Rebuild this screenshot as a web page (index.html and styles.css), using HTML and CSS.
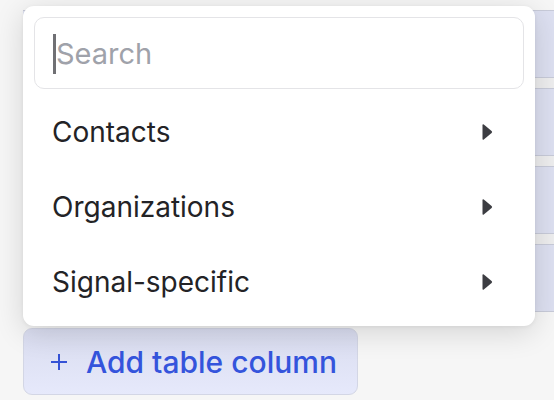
FILE: index.html
```html
<!DOCTYPE html>
<html>
<head>
<meta charset="utf-8">
<link rel="stylesheet" href="styles.css">
</head>
<body>
<div class="page">
  <div class="table">
    <div class="row"></div>
    <div class="band"></div>
    <div class="row"></div>
    <div class="band"></div>
    <div class="row"></div>
    <div class="band"></div>
    <div class="row"></div>
  </div>
  <button class="add-btn"><svg class="plus" viewBox="0 0 18 18" width="18" height="18"><path d="M9 1V17M1 9H17" stroke="#3552d6" stroke-width="2" fill="none"/></svg><span>Add table column</span></button>
</div>

<div class="dropdown">
  <div class="search">
    <span class="caret"></span>
    <span class="placeholder">Search</span>
  </div>
  <ul class="menu">
    <li class="item"><span>Contacts</span><svg class="arrow" viewBox="0 0 12 18" width="12" height="18"><path d="M1.5 2.2 Q1.5 0.6 2.8 1.6 L10.6 8 Q11.6 9 10.6 10 L2.8 16.4 Q1.5 17.4 1.5 15.8 Z" fill="#3c3d42"/></svg></li>
    <li class="item"><span>Organizations</span><svg class="arrow" viewBox="0 0 12 18" width="12" height="18"><path d="M1.5 2.2 Q1.5 0.6 2.8 1.6 L10.6 8 Q11.6 9 10.6 10 L2.8 16.4 Q1.5 17.4 1.5 15.8 Z" fill="#3c3d42"/></svg></li>
    <li class="item"><span>Signal-specific</span><svg class="arrow" viewBox="0 0 12 18" width="12" height="18"><path d="M1.5 2.2 Q1.5 0.6 2.8 1.6 L10.6 8 Q11.6 9 10.6 10 L2.8 16.4 Q1.5 17.4 1.5 15.8 Z" fill="#3c3d42"/></svg></li>
  </ul>
</div>
</body>
</html>
```

FILE: styles.css
```css
html, body {
  margin: 0;
  padding: 0;
}
body {
  width: 554px;
  height: 400px;
  overflow: hidden;
  background: #f6f6f6;
  font-family: Inter, "Noto Sans", sans-serif;
  position: relative;
}
.page {
  padding-top: 10px;
  padding-left: 23px;
}
.table {
  display: flex;
  flex-direction: column;
  width: 531px;
}
.row {
  height: 66px;
  background: #dde0f1;
  border-top: 1px solid #c8cbd9;
}
.band {
  height: 10px;
  background: #eeeeef;
  border-top: 1px solid #c8cbd9;
}
.table .row:last-child {
  border-bottom: 1px solid #c8cbd9;
}
.add-btn {
  margin-top: 16px;
  width: 335px;
  height: 67px;
  box-sizing: border-box;
  border: 1px solid #d3d6e5;
  border-radius: 9px;
  background: linear-gradient(#d9dcef, #e6e9fb);
  color: #3454dc;
  font-family: Inter, "Noto Sans", sans-serif;
  font-size: 30px;
  font-weight: 500;
  display: flex;
  align-items: center;
  padding: 0 0 0 26px;
  gap: 18px;
}
.plus {
  display: block;
  flex: none;
}
.dropdown {
  position: absolute;
  left: 23px;
  top: 6px;
  width: 512px;
  height: 320px;
  box-sizing: border-box;
  background: #fff;
  border-radius: 11px;
  box-shadow: 0 6px 30px rgba(0, 0, 0, 0.14), 0 1px 4px rgba(0, 0, 0, 0.06);
  padding: 11px 11px 7px;
}
.search {
  position: relative;
  height: 72px;
  box-sizing: border-box;
  border: 1.5px solid #e4e4e7;
  border-radius: 10px;
  display: flex;
  align-items: center;
  padding-left: 21px;
}
.placeholder {
  font-size: 29px;
  color: #9fa2aa;
}
.caret {
  position: absolute;
  left: 18px;
  top: 16px;
  width: 3px;
  height: 40px;
  background: #707074;
}
.menu {
  list-style: none;
  margin: 5px 0 0;
  padding: 0;
}
.item {
  height: 75px;
  display: flex;
  align-items: center;
  justify-content: space-between;
  padding: 0 31px 0 18px;
  font-size: 28px;
  color: #232326;
}
.arrow {
  display: block;
}
```
